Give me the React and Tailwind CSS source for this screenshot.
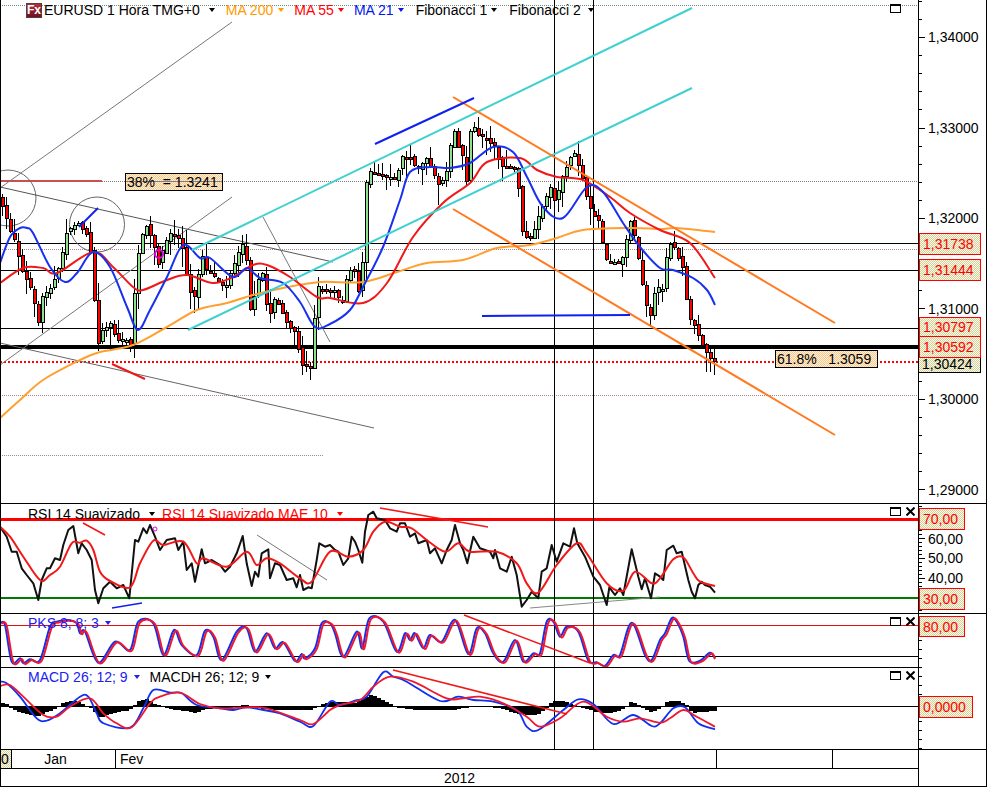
import React from "react";

const z = (arr, ox, oy) => {
  const out = [];
  for (let i = 0; i < arr.length; i += 2) out.push([ox + arr[i] / 3, oy + arr[i + 1] / 3]);
  return out;
};
const smooth = (p) => {
  let d = `M${p[0][0].toFixed(1)} ${p[0][1].toFixed(1)}`;
  for (let i = 0; i < p.length - 1; i++) {
    const a = p[Math.max(0, i - 1)], b = p[i], c = p[i + 1], e = p[Math.min(p.length - 1, i + 2)];
    const c1 = [b[0] + (c[0] - a[0]) / 6, b[1] + (c[1] - a[1]) / 6];
    const c2 = [c[0] - (e[0] - b[0]) / 6, c[1] - (e[1] - b[1]) / 6];
    d += `C${c1[0].toFixed(1)} ${c1[1].toFixed(1)} ${c2[0].toFixed(1)} ${c2[1].toFixed(1)} ${c[0].toFixed(1)} ${c[1].toFixed(1)}`;
  }
  return d;
};
const poly = (p) => p.map((q) => q[0].toFixed(1) + "," + q[1].toFixed(1)).join(" ");
const interp = (p, x) => {
  if (x <= p[0][0]) return p[0][1];
  for (let i = 0; i < p.length - 1; i++) {
    if (x <= p[i + 1][0]) {
      const t = (x - p[i][0]) / (p[i + 1][0] - p[i][0] || 1);
      return p[i][1] + t * (p[i + 1][1] - p[i][1]);
    }
  }
  return p[p.length - 1][1];
};

const price = [
  [0, 198], [5, 207], [12, 232], [18, 243], [22, 267], [33, 290], [40, 323], [43, 297], [53, 287], [63, 260], [67, 233], [80, 222], [90, 236], [95, 273], [98, 350], [103, 330], [113, 323], [118, 340], [128, 340], [129, 367], [133, 337], [137, 277], [142, 240], [148, 225], [155, 243], [160, 263], [167, 243], [173, 233], [183, 240], [187, 270], [195, 303], [200, 273], [203, 253], [208, 270], [227, 287], [240, 253], [245, 243], [250, 270], [252, 310], [257, 293], [263, 267], [270, 317], [277, 297], [287, 320], [297, 333], [303, 363], [312, 367], [315, 333], [318, 287], [330, 290], [337, 290], [343, 307], [350, 270], [357, 270], [362, 303], [365, 240], [368, 183], [370, 170], [385, 175], [398, 180], [402, 157], [413, 157], [418, 172], [427, 157], [440, 183], [447, 177], [455, 127], [462, 153], [467, 160], [468, 180], [473, 120], [478, 133], [495, 143], [502, 165], [512, 167], [513, 153], [520, 187], [522, 230], [533, 240], [540, 217], [552, 187], [557, 203], [563, 178], [575, 150], [583, 173], [590, 207], [600, 220], [607, 260], [623, 263], [632, 220], [637, 240], [645, 290], [651, 322], [658, 282], [663, 297], [667, 260], [673, 240], [685, 270], [690, 318], [697, 325], [703, 343], [713, 360]
];
let seed = 7;
const rnd = () => ((seed = (seed * 16807) % 2147483647) / 2147483647);
const candles = [];
for (let x = 2; x <= 714; x += 4) {
  const o = interp(price, x - 2) + (rnd() - 0.5) * 3;
  const c = interp(price, x + 2) + (rnd() - 0.5) * 3;
  const hi = Math.min(o, c) - rnd() * rnd() * 17 - 1;
  const lo = Math.max(o, c) + rnd() * rnd() * 22 + 1;
  candles.push({ x, o, c, hi, lo, up: c < o });
}

const ma21 = [[0, 263], [10, 237], [20, 228], [27, 228], [33, 233], [50, 267], [65, 282], [77, 273], [93, 252], [110, 267], [127, 307], [138, 330], [150, 310], [167, 277], [183, 245], [200, 258], [210, 258], [233, 277], [247, 268], [260, 278], [283, 283], [300, 302], [315, 327], [330, 324], [350, 310], [363, 287], [383, 247], [400, 200], [410, 172], [430, 167], [450, 168], [470, 163], [493, 147], [513, 152], [527, 177], [543, 207], [563, 218], [587, 187], [603, 192], [623, 223], [640, 247], [660, 268], [673, 270], [693, 278], [707, 290], [715, 305]];
const ma55 = [[0, 283], [23, 268], [43, 268], [57, 273], [93, 252], [113, 267], [133, 287], [143, 290], [167, 280], [187, 275], [213, 283], [233, 277], [253, 265], [267, 265], [290, 277], [317, 297], [330, 298], [363, 303], [387, 283], [413, 237], [443, 203], [470, 183], [487, 162], [520, 158], [537, 170], [557, 177], [583, 180], [610, 197], [630, 213], [660, 230], [690, 243], [715, 278]];
const ma200 = [[0, 418], [20, 400], [43, 380], [80, 360], [100, 352], [133, 345], [167, 327], [197, 310], [227, 303], [253, 295], [283, 288], [320, 282], [363, 282], [397, 272], [427, 263], [463, 260], [497, 248], [530, 245], [557, 238], [583, 230], [630, 228], [660, 229], [677, 228], [715, 232]];

const rsiB = [
  ...z([0,80,20,110,35,155,50,155,65,205,80,225,100,250,115,300,125,240,140,205,150,205,165,175,180,180,190,135,205,90,220,78,235,160,245,130,260,150,275,180,285,270,295,310,310,265,330,245,350,265,370,255,388,295,405,120,415,125,430,85,440,100,450,75,465,110,480,150,500,120,525,115,535,150,550,125,560,210,575,190,585,245,605,148,615,190,635,180,660,195,675,215,690,200,710,160,728,108,740,190,755,258,765,215,775,230,785,160,805,148,810,235,825,190,840,195,860,240,880,235,890,262,900,225,910,270,925,262,935,265,950,180,958,130,975,140], 0, 500),
  ...z([0,135,15,150,25,155,40,195,55,175,65,110,75,125,85,150,97,188,105,95,115,45,130,35,140,55,165,60,180,85,200,95,210,70,225,70,240,110,255,100,265,130,290,120,300,160,315,145,335,190,350,150,365,120,375,75,390,130,400,150,412,190,430,110,450,145,480,155,490,175,495,150,510,205,530,215,545,170,560,225,575,320,590,300,605,275,625,295,635,215,650,205,665,135,680,185,700,130,720,140,732,85,742,130,765,170,790,230,810,255,830,315,838,262,855,285,870,265,880,285,905,148,925,230,935,268,945,235,963,295,975,220], 330, 500),
  ...z([0,230,10,240,20,150,40,137,50,160,65,155,85,240,95,275,105,295,115,255,125,245,135,255,150,260,165,278], 660, 500),
];
const rsiR = [
  ...z([0,80,30,110,70,170,120,240,150,225,180,200,215,130,240,128,260,122,280,150,300,215,330,243,390,262,420,190,460,122,490,135,550,125,590,190,610,175,680,200,740,155,770,195,800,175,840,190,900,235,935,245], 0, 500),
  ...z([0,155,55,170,100,150,130,95,165,65,210,80,245,85,290,120,345,155,385,130,420,155,500,155,560,190,590,250,625,278,680,195,740,130,770,160,830,250,880,272,915,215,965,250], 330, 500),
  ...z([0,235,40,178,70,172,100,220,120,245,165,258], 660, 500),
];
const pkB = [
  ...z([0,370,15,375,35,485,60,475,70,490,90,478,120,480,150,380,170,365,205,360,230,370,240,400,255,395,295,488,345,425,390,450,415,365,460,370,490,465,522,390,545,435,590,465,615,392,640,410,665,480,710,395,740,385,765,455,800,400,825,445,850,427,885,483,905,462,915,475,945,445,965,370], 0, 500),
  ...z([0,370,15,400,40,470,80,395,97,445,118,355,160,365,200,455,225,400,240,420,255,400,280,445,300,405,335,425,375,360,415,462,440,385,465,400,490,460,520,485,555,420,580,485,610,460,630,460,650,365,670,365,690,410,710,380,745,395,775,482,800,487,825,497,850,465,870,465,905,368,945,465,965,480], 330, 500),
  ...z([0,420,15,400,35,355,50,365,70,410,88,483,120,482,150,458,165,475], 660, 500),
];
const pkR = pkB.map(([x, y], i) => [Math.min(x + 1.7, 715), y + (i === 0 ? 0 : 0.8)]);
const mB = [
  ...z([0,545,20,550,60,590,110,655,140,662,180,640,240,590,265,590,290,640,310,670,390,683,430,625,460,570,510,578,545,580,590,615,660,625,700,630,740,622,790,630,840,640,900,665,940,678], 0, 500),
  ...z([0,605,30,615,80,600,110,590,160,517,190,530,230,545,330,603,385,590,430,600,490,605,560,630,590,680,625,690,700,630,745,598,790,612,850,672,910,645,965,678], 330, 500),
  ...z([0,670,40,625,75,622,115,670,165,688], 660, 500),
];
const mR = [
  ...z([0,558,30,555,70,590,130,645,170,650,210,620,270,595,310,640,350,670,395,682,450,610,480,590,540,578,600,612,660,625,740,622,800,625,900,660,940,672], 0, 500),
  ...z([0,630,30,615,90,600,130,560,180,530,250,545,350,595,400,595,450,590,520,610,590,650,630,680,690,655,760,605,830,650,880,665,930,655], 330, 500),
  ...z([0,668,30,655,70,630,110,650,165,680], 660, 500),
];
const histP = [[0,-4],[8,-2],[14,3],[25,7],[38,9],[45,6],[55,2],[62,-3],[75,-6],[85,-2],[93,2],[100,11],[113,6],[130,3],[140,-6],[148,-8],[155,-3],[165,1],[185,4],[197,6],[205,2],[240,0],[245,-2],[255,1],[280,3],[310,3],[325,-3],[335,-5],[355,-4],[365,-9],[373,-12],[385,-5],[398,1],[420,3],[440,3],[455,3],[470,0],[490,0],[505,2],[517,7],[530,8],[540,7],[548,0],[552,-5],[565,-6],[572,-2],[585,1],[595,5],[610,6],[622,3],[632,-5],[640,-1],[652,5],[662,1],[667,-5],[677,-6],[688,-1],[692,6],[715,4]];
const hist = [];
for (let x = 1; x < 716; x += 4) hist.push({ x, v: interp(histP, x + 2) });

const Verticals = ({ y1, y2 }) => (
  <g stroke="#000" strokeWidth="1" shapeRendering="crispEdges">
    <line x1="554.5" x2="554.5" y1={y1} y2={y2} />
    <line x1="593.5" x2="593.5" y1={y1} y2={y2} />
  </g>
);
const L = ({ p, c, w = 1 }) => <line x1={p[0]} y1={p[1]} x2={p[2]} y2={p[3]} stroke={c} strokeWidth={w} />;
const H = ({ y, c = "#000", w = 1, dash, x2 = 918, x1 = 0 }) => (
  <line x1={x1} x2={x2} y1={y} y2={y} stroke={c} strokeWidth={w} strokeDasharray={dash} shapeRendering="crispEdges" />
);
const Tri = ({ c = "#000", cls = "" }) => (
  <svg width="6" height="4" viewBox="0 0 6 4" className={cls}><polygon points="0,0 6,0 3,4" fill={c} /></svg>
);
const Controls = ({ top, x = true }) => (
  <div className={`absolute right-[3px] flex items-center gap-[5px] ${top}`}>
    <svg width="11" height="9" viewBox="0 0 11 9"><rect x="0.5" y="0.5" width="10" height="8" fill="#fff" stroke="#000" /><rect x="0" y="0" width="11" height="2" fill="#000" /></svg>
    {x ? (
      <svg width="9" height="9" viewBox="0 0 9 9"><path d="M0.5 0.5L8.5 8.5M8.5 0.5L0.5 8.5" stroke="#000" strokeWidth="2" /></svg>
    ) : (
      <span className="w-[9px]" />
    )}
  </div>
);
const DITHER = "bg-[repeating-conic-gradient(#cfcf9f_0_25%,#fffbe6_0_50%)] bg-[length:2px_2px]";
const BADGE = "bg-[repeating-conic-gradient(#f5c88c_0_25%,#fff0dc_0_50%)] bg-[length:2px_2px]";

function Chart({ top, h, children }) {
  return (
    <svg className="absolute inset-0 w-full h-full" viewBox={`1 ${top} 917 ${h}`} preserveAspectRatio="none">
      {children}
    </svg>
  );
}
const ticks = (from, to, step, majorEvery, offset = 0) => {
  const out = [];
  let i = 0;
  for (let y = from; y < to; y += step, i++) {
    const maj = (i + offset) % majorEvery === 0;
    out.push(<line key={y} x1="0" x2={maj ? 6 : 3} y1={y + 0.5} y2={y + 0.5} stroke="#000" shapeRendering="crispEdges" />);
  }
  return out;
};
const AxisTicks = ({ top, h, from, to, step, maj, offset }) => (
  <svg className="absolute left-0 top-0 w-[8px] h-full" viewBox={`0 ${top} 8 ${h}`} preserveAspectRatio="none">
    {ticks(from, to, step, maj, offset)}
  </svg>
);
const AxisText = ({ cls, children }) => (
  <span className={`absolute left-[9px] leading-none text-black ${cls}`}>{children}</span>
);
const AxisBadge = ({ cls, red = true, children }) => (
  <span className={`absolute left-0 flex items-center pl-[3px] leading-none border ${DITHER} ${red ? "border-[#ff0000] text-[#ff0000] z-10" : "border-black text-black"} ${cls}`}>
    {children}
  </span>
);

export default function App() {
  return (
    <div className="w-[987px] h-[787px] bg-white grid grid-cols-[917px_68px] grid-rows-[504px_110px_54px_82px_19px_17px] border-l border-r border-b border-black text-[14px] text-black overflow-hidden font-['Liberation_Sans',Arial,sans-serif]">
      {/* Main chart */}
      <div className="relative border-b border-black">
        <Chart top={0} h={503}>
          <H y={5.5} c="#6f8f80" dash="1 1" />
          <H y={181.5} c="#808080" dash="1 1" />
          <H y={249.5} c="#a88888" dash="1 1" />
          <H y={395.5} c="#a88888" dash="1 1" />
          <H y={455.5} c="#909090" dash="1 1" x2={323} />
          <H y={181} c="#c85050" w={2} x2={102} />
          <H y={243.5} />
          <H y={270.5} />
          <H y={328.5} />
          <H y={347} w={4} />
          <H y={362} c="#ff0000" w={2} dash="2 2" />
          <g fill="none" stroke="#666" strokeWidth="1">
            <circle cx="8" cy="198" r="28" />
            <circle cx="97" cy="224.5" r="27.5" />
            <L p={[0, 188, 232, 22]} c="#777" />
            <L p={[0, 365, 232, 197]} c="#777" />
            <L p={[0, 187, 333, 262]} c="#555" />
            <L p={[0, 343, 374, 428]} c="#666" />
            <L p={[263, 217, 330, 342]} c="#777" />
          </g>
          <Verticals y1={0} y2={503} />
          <g>
            {candles.map((k) => (
              <line key={k.x} x1={k.x + 0.5} x2={k.x + 0.5} y1={Math.round(k.hi)} y2={Math.round(k.lo)} stroke="#000" shapeRendering="crispEdges" />
            ))}
            {candles.map((k) => {
              const t = Math.round(Math.min(k.o, k.c));
              const b = Math.max(t + 2, Math.round(Math.max(k.o, k.c)));
              return <rect key={k.x} x={k.x - 1} y={t + 0.5} width={3} height={b - t} fill={k.up ? "#8fe08f" : "#ff0000"} stroke="#000" strokeWidth="1" shapeRendering="crispEdges" />;
            })}
          </g>
          <g fill="none" strokeWidth="2" strokeLinejoin="round">
            <path d={smooth(ma200)} stroke="#ff9f30" />
            <path d={smooth(ma55)} stroke="#f01818" />
            <path d={smooth(ma21)} stroke="#1830f0" />
          </g>
          <L p={[188, 330, 692, 88]} c="#40d0d0" w={2} />
          <L p={[192, 250, 692, 8]} c="#40d0d0" w={2} />
          <L p={[453, 97, 835, 323]} c="#ff7a20" w={2} />
          <L p={[453, 209, 835, 435]} c="#ff7a20" w={2} />
          <L p={[375, 144, 474, 98]} c="#1020f0" w={2} />
          <L p={[482, 316, 630, 315]} c="#1020f0" w={2} />
          <L p={[79, 227, 98, 208]} c="#1020f0" w={2} />
          <L p={[112, 364, 145, 379]} c="#f01818" w={2} />
          <circle cx="159" cy="254" r="4" fill="none" stroke="#e000e0" strokeWidth="2" />
        </Chart>
        <div className="absolute left-[25px] top-[2px] flex items-center h-[16px] leading-none">
          <span className="w-[16px] h-[15px] mr-[2px] flex items-center justify-center bg-gradient-to-b from-[#b03040] to-[#701020] border border-[#5a3a3a] text-white text-[12px] font-bold">Fx</span>
          <span>EURUSD 1 Hora TMG+0</span>
          <Tri cls="ml-[9px]" />
          <span className="ml-[11px] text-[#ff9a00]">MA 200</span>
          <Tri c="#ff9a00" cls="ml-[5px]" />
          <span className="ml-[10px] text-[#ff0000]">MA 55</span>
          <Tri c="#ff0000" cls="ml-[4px]" />
          <span className="ml-[10px] text-[#0018f0]">MA 21</span>
          <Tri c="#0018f0" cls="ml-[4px]" />
          <span className="ml-[12px]">Fibonacci 1</span>
          <Tri cls="ml-[4px]" />
          <span className="ml-[12px]">Fibonacci 2</span>
          <Tri cls="ml-[7px]" />
        </div>
        <Controls top="top-[4px]" x={false} />
        <span className={`absolute left-[124px] top-[173px] w-[98px] h-[18px] flex items-center pl-[1px] leading-none border border-black whitespace-pre ${BADGE}`}>
          <span className="absolute inset-x-0 top-[7px] h-px bg-[#808080]" />
          <span className="relative">38%  = 1.3241</span>
        </span>
        <span className={`absolute left-[774px] top-[350px] w-[103px] h-[18px] flex items-center pl-[1px] leading-none border border-black whitespace-pre ${BADGE}`}>61.8%   1.3059</span>
      </div>
      <div className="relative border-l border-b border-black">
        <AxisTicks top={0} h={503} from={1} to={503} step={18.08} maj={5} offset={3} />
        <AxisText cls="top-[30px]">1,34000</AxisText>
        <AxisText cls="top-[121px]">1,33000</AxisText>
        <AxisText cls="top-[211px]">1,32000</AxisText>
        <AxisText cls="top-[302px]">1,31000</AxisText>
        <AxisText cls="top-[392px]">1,30000</AxisText>
        <AxisText cls="top-[483px]">1,29000</AxisText>
        <AxisBadge cls="top-[233px] w-[62px] h-[22px]">1,31738</AxisBadge>
        <AxisBadge cls="top-[259px] w-[62px] h-[22px]">1,31444</AxisBadge>
        <AxisBadge red={false} cls="top-[352px] w-[62px] h-[21px] border-t-0 border-l-0 pt-[3px]">1,30424</AxisBadge>
        <AxisBadge cls="top-[317px] w-[62px] h-[20px]">1,30797</AxisBadge>
        <AxisBadge cls="top-[336px] w-[62px] h-[22px]">1,30592</AxisBadge>
      </div>

      {/* RSI */}
      <div className="relative border-b border-black">
        <Chart top={504} h={109}>
          <H y={519} c="#ff0000" w={3} />
          <H y={598} c="#007a00" w={2} />
          <Verticals y1={504} y2={613} />
          <L p={[257, 535, 327, 580]} c="#777" />
          <L p={[530, 608, 660, 597]} c="#888" />
          <polyline points={poly(rsiB)} fill="none" stroke="#111" strokeWidth="2" strokeLinejoin="round" />
          <path d={smooth(rsiR)} fill="none" stroke="#f01818" strokeWidth="2" />
          <L p={[83, 523, 105, 535]} c="#f01818" w={1.6} />
          <L p={[112, 608, 142, 603]} c="#1020f0" w={1.6} />
          <L p={[380, 508, 488, 527]} c="#f01818" w={1.6} />
          <circle cx="155" cy="529" r="2" fill="none" stroke="#e000e0" />
        </Chart>
        <div className="absolute left-[27px] top-[2px] flex items-center h-[16px] leading-none">
          <span>RSI 14 Suavizado</span>
          <Tri cls="ml-[9px]" />
          <span className="ml-[7px] text-[#ff0000]">RSI 14 Suavizado MAE 10</span>
          <Tri c="#ff0000" cls="ml-[9px]" />
        </div>
        <Controls top="top-[3px]" />
      </div>
      <div className="relative border-l border-b border-black">
        <AxisTicks top={504} h={109} from={506} to={613} step={4} maj={5} offset={2} />
        <AxisText cls="top-[28px]">60,00</AxisText>
        <AxisText cls="top-[47px]">50,00</AxisText>
        <AxisText cls="top-[67px]">40,00</AxisText>
        <AxisBadge cls="top-[4px] w-[46px] h-[22px]">70,00</AxisBadge>
        <AxisBadge cls="top-[84px] w-[46px] h-[22px]">30,00</AxisBadge>
      </div>

      {/* PKS */}
      <div className="relative border-b border-black">
        <Chart top={614} h={53}>
          <H y={625.5} c="#e01010" />
          <H y={656.5} />
          <Verticals y1={614} y2={667} />
          <path d={smooth(pkB)} fill="none" stroke="#1030f0" strokeWidth="2" />
          <path d={smooth(pkR)} fill="none" stroke="#f01830" strokeWidth="2" />
          <L p={[464, 615, 590, 663]} c="#f01818" w={1.6} />
        </Chart>
        <div className="absolute left-[27px] top-[1px] flex items-center h-[16px] leading-none text-[#2020f0]">
          <span>PKS 8; 8; 3</span>
          <Tri c="#2020f0" cls="ml-[6px]" />
        </div>
        <Controls top="top-[3px]" />
      </div>
      {/* Right axis for PKS + MACD */}
      <div className="relative row-span-2 border-l border-b border-black">
        <AxisTicks top={614} h={135} from={622} to={749} step={9} maj={200} />
        <AxisBadge cls="top-[2px] w-[46px] h-[21px]">80,00</AxisBadge>
        <AxisBadge cls="top-[82px] w-[54px] h-[22px]">0,0000</AxisBadge>
      </div>

      {/* MACD */}
      <div className="relative border-b border-black">
        <Chart top={668} h={81}>
          <H y={706.5} />
          <Verticals y1={668} y2={749} />
          <g shapeRendering="crispEdges">
            {hist.map((b) => (
              <rect key={b.x} x={b.x} y={b.v < 0 ? 706.5 + b.v : 706.5} width={4} height={Math.abs(b.v) + 0.5} fill="#000" />
            ))}
          </g>
          <path d={smooth(mB)} fill="none" stroke="#1030f0" strokeWidth="1.8" />
          <path d={smooth(mR)} fill="none" stroke="#f01830" strokeWidth="1.8" />
          <L p={[393, 670, 567, 714]} c="#f01818" w={1.6} />
        </Chart>
        <div className="absolute left-[27px] top-[1px] flex items-center h-[16px] leading-none">
          <span className="text-[#2020f0]">MACD 26; 12; 9</span>
          <Tri c="#2020f0" cls="ml-[6px]" />
          <span className="ml-[10px]">MACDH 26; 12; 9</span>
          <Tri cls="ml-[6px]" />
        </div>
        <Controls top="top-[3px]" />
      </div>

      {/* Date row */}
      <div className="flex border-b border-black leading-none items-stretch">
        <span className={`w-[11px] border-r border-black flex items-center ${DITHER}`}>0</span>
        <span className="w-[104px] border-r border-black flex items-center justify-center pr-[16px]">Jan</span>
        <span className="w-[601px] border-r border-black flex items-center pl-[4px]">Fev</span>
        <span className="w-[116px] border-r border-black" />
      </div>
      <div className="row-span-2 border-l border-black" />
      <div className="flex items-center justify-center leading-none">2012</div>
    </div>
  );
}
